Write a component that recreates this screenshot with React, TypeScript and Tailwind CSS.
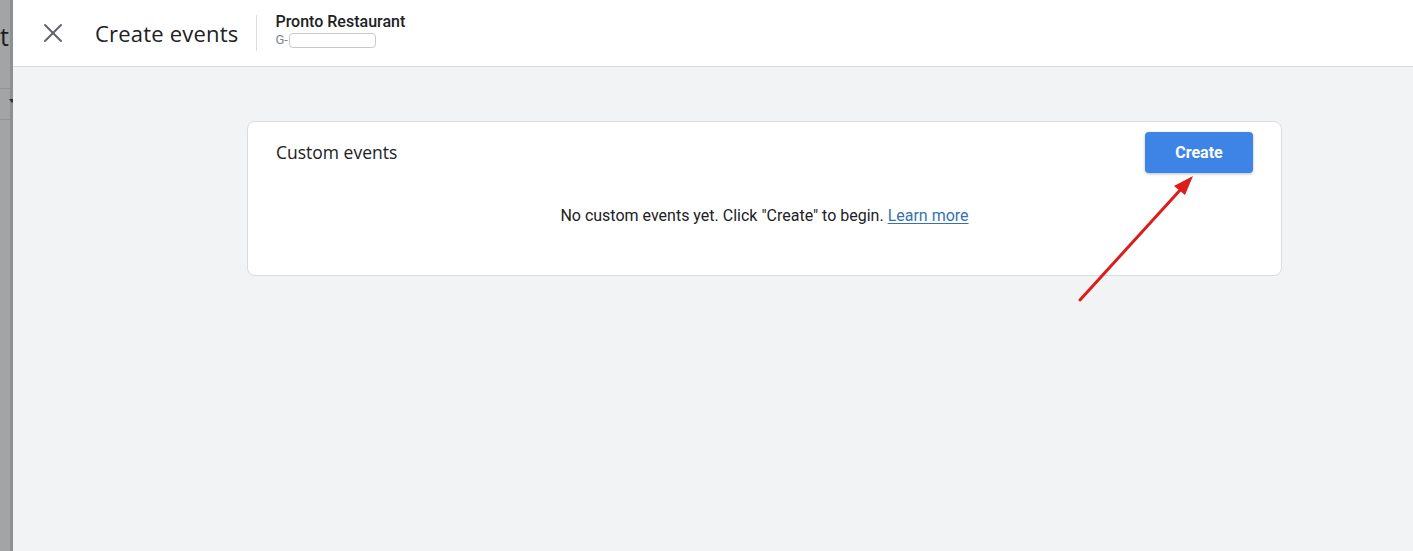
import { X } from "lucide-react"

const googleSans = "font-['Open_Sans',sans-serif]"
const roboto = "font-['Roboto',sans-serif]"

function BackdropEdge() {
  return (
    <div className="relative w-[13px] shrink-0 overflow-hidden bg-[#a3a4a5]">
      <div className="absolute right-0 top-0 h-full w-[3px] bg-[#8e8f90]" />
      <div className="absolute left-0 top-[24px] font-['Open_Sans',sans-serif] text-[25px] leading-none text-[#1c1c1c]">
        t
      </div>
      <div className="absolute left-0 top-[88px] h-px w-[10px] bg-[#939495]" />
      <div className="absolute left-0 top-[119px] h-px w-[10px] bg-[#939495]" />
      <div className="absolute left-[9px] top-[99px] h-0 w-0 border-x-[3px] border-t-[4px] border-x-transparent border-t-[#333]" />
    </div>
  )
}

function Header() {
  return (
    <header className="flex h-[67px] shrink-0 items-center border-b border-[#dadce0] bg-white">
      <button className="ml-[24px] flex h-[32px] w-[32px] items-center justify-center text-[#5f6368]">
        <X className="h-[32px] w-[32px]" strokeWidth={1.4} />
      </button>
      <h1 className={`${googleSans} ml-[26px] text-[22px] tracking-[0.2px] text-[#202124]`}>Create events</h1>
      <div className="ml-[18px] h-[36px] w-px bg-[#dadce0]" />
      <div className={`${roboto} ml-[18px] -mt-[6px] flex flex-col`}>
        <span className="text-[16px] font-medium leading-[20px] text-[#202124]">Pronto Restaurant</span>
        <span className="flex items-center text-[13px] leading-[16px] text-[#80868b]">
          G-
          <span className="ml-[1px] h-[15px] w-[87px] rounded-[4px] border border-[#c9c9c9] bg-white" />
        </span>
      </div>
    </header>
  )
}

export default function App() {
  return (
    <div className="relative flex h-[551px] w-[1413px] overflow-hidden">
      <BackdropEdge />
      <div className="flex flex-1 flex-col">
        <Header />
        <main className="flex-1 bg-[#f1f3f4] pl-[234px] pt-[54px]">
          <section className="h-[155px] w-[1035px] rounded-[8px] border border-[#dadce0] bg-white">
            <div className="flex items-start justify-between pl-[28px] pr-[28px] pt-[10px]">
              <h2 className={`${googleSans} mt-[7px] text-[17.5px] text-[#202124]`}>Custom events</h2>
              <button
                className={`${roboto} h-[41px] w-[108px] rounded-[4px] bg-[#3e84e6] text-[16px] font-bold text-white shadow-[0_1px_3px_rgba(60,64,67,0.35)]`}
              >
                Create
              </button>
            </div>
            <p className={`${roboto} mt-[31px] text-center text-[16px] text-[#202124]`}>
              No custom events yet. Click "Create" to begin.{" "}
              <a className="text-[#3572b0] underline underline-offset-2">Learn more</a>
            </p>
          </section>
        </main>
      </div>

      {/* annotation arrow */}
      <svg className="pointer-events-none absolute left-0 top-0" width="1413" height="551">
        <line x1="1080" y1="300" x2="1182" y2="188" stroke="#dd1c1c" strokeWidth="3" strokeLinecap="round" />
        <polygon points="1193,176 1174,186 1185,195" fill="#dd1c1c" />
      </svg>
    </div>
  )
}
